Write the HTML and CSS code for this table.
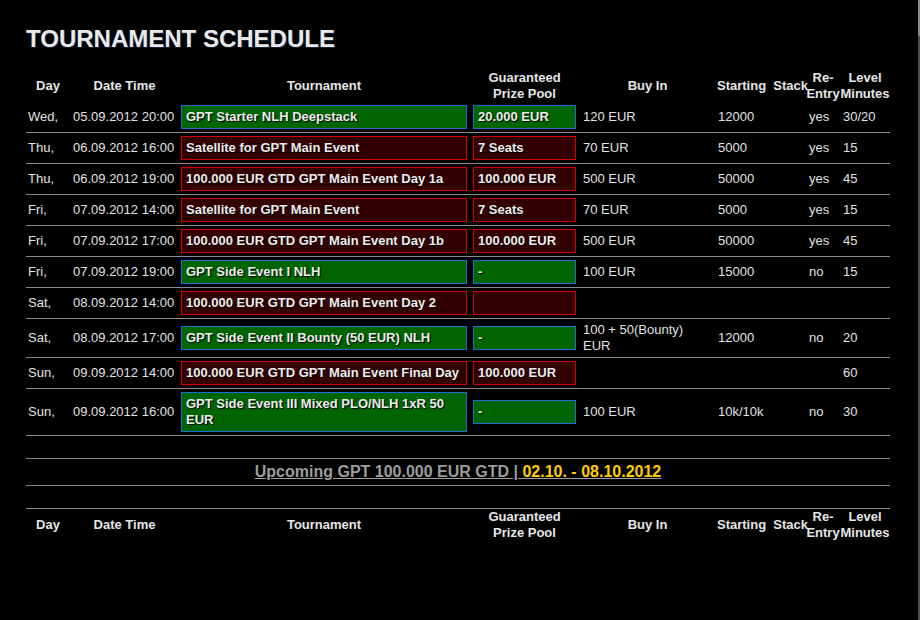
FILE: index.html
```html
<!DOCTYPE html>
<html lang="en">
<head>
<meta charset="utf-8">
<title>Tournament Schedule</title>
<link rel="stylesheet" href="styles.css">
</head>
<body>
<div class="page">
  <main class="content">
    <h1 class="title">TOURNAMENT SCHEDULE</h1>
    <table class="schedule">
      <colgroup>
        <col class="c-day"><col class="c-date"><col class="c-tour"><col class="c-prize"><col class="c-buy"><col class="c-stack"><col class="c-re"><col class="c-level">
      </colgroup>
      <thead>
        <tr><th>Day</th><th>Date Time</th><th>Tournament</th><th>Guaranteed<br>Prize Pool</th><th>Buy In</th><th class="stack-head">Starting&nbsp; Stack</th><th>Re-<br>Entry</th><th>Level<br>Minutes</th></tr>
      </thead>
      <tbody>
        <tr><td>Wed,</td><td>05.09.2012 20:00</td><td class="tour"><div class="box green">GPT Starter NLH Deepstack</div></td><td class="prize"><div class="box green">20.000 EUR</div></td><td class="buy">120 EUR</td><td>12000</td><td>yes</td><td>30/20</td></tr>
        <tr><td>Thu,</td><td>06.09.2012 16:00</td><td class="tour"><div class="box red">Satellite for GPT Main Event</div></td><td class="prize"><div class="box red">7 Seats</div></td><td class="buy">70 EUR</td><td>5000</td><td>yes</td><td>15</td></tr>
        <tr><td>Thu,</td><td>06.09.2012 19:00</td><td class="tour"><div class="box red">100.000 EUR GTD GPT Main Event Day 1a</div></td><td class="prize"><div class="box red">100.000 EUR</div></td><td class="buy">500 EUR</td><td>50000</td><td>yes</td><td>45</td></tr>
        <tr><td>Fri,</td><td>07.09.2012 14:00</td><td class="tour"><div class="box red">Satellite for GPT Main Event</div></td><td class="prize"><div class="box red">7 Seats</div></td><td class="buy">70 EUR</td><td>5000</td><td>yes</td><td>15</td></tr>
        <tr><td>Fri,</td><td>07.09.2012 17:00</td><td class="tour"><div class="box red">100.000 EUR GTD GPT Main Event Day 1b</div></td><td class="prize"><div class="box red">100.000 EUR</div></td><td class="buy">500 EUR</td><td>50000</td><td>yes</td><td>45</td></tr>
        <tr><td>Fri,</td><td>07.09.2012 19:00</td><td class="tour"><div class="box green">GPT Side Event I NLH</div></td><td class="prize"><div class="box green">-</div></td><td class="buy">100 EUR</td><td>15000</td><td>no</td><td>15</td></tr>
        <tr><td>Sat,</td><td>08.09.2012 14:00</td><td class="tour"><div class="box red">100.000 EUR GTD GPT Main Event Day 2</div></td><td class="prize"><div class="box red">&nbsp;</div></td><td class="buy"></td><td></td><td></td><td></td></tr>
        <tr><td>Sat,</td><td>08.09.2012 17:00</td><td class="tour"><div class="box green">GPT Side Event II Bounty (50 EUR) NLH</div></td><td class="prize"><div class="box green">-</div></td><td class="buy">100 + 50(Bounty) EUR</td><td>12000</td><td>no</td><td>20</td></tr>
        <tr><td>Sun,</td><td>09.09.2012 14:00</td><td class="tour"><div class="box red">100.000 EUR GTD GPT Main Event Final Day</div></td><td class="prize"><div class="box red">100.000 EUR</div></td><td class="buy"></td><td></td><td></td><td>60</td></tr>
        <tr><td>Sun,</td><td>09.09.2012 16:00</td><td class="tour"><div class="box green">GPT Side Event III Mixed PLO/NLH 1xR 50 EUR</div></td><td class="prize"><div class="box green">-</div></td><td class="buy">100 EUR</td><td>10k/10k</td><td>no</td><td>30</td></tr>
      </tbody>
    </table>

    <div class="upcoming">
      <a class="upcoming-link" href="#">Upcoming GPT 100.000 EUR GTD | <span class="dates">02.10. - 08.10.2012</span></a>
    </div>

    <table class="schedule next">
      <colgroup>
        <col class="c-day"><col class="c-date"><col class="c-tour"><col class="c-prize"><col class="c-buy"><col class="c-stack"><col class="c-re"><col class="c-level">
      </colgroup>
      <thead>
        <tr><th>Day</th><th>Date Time</th><th>Tournament</th><th>Guaranteed<br>Prize Pool</th><th>Buy In</th><th class="stack-head">Starting&nbsp; Stack</th><th>Re-<br>Entry</th><th>Level<br>Minutes</th></tr>
      </thead>
    </table>
  </main>
  <div class="scrollbar"></div>
</div>
</body>
</html>
```
FILE: styles.css
```css
html, body {
  margin: 0;
  padding: 0;
  background: #000;
}

body {
  font-family: "Liberation Sans", Arial, sans-serif;
  font-size: 13px;
  line-height: 16px;
  color: #e2e2e2;
}

.page {
  display: flex;
  width: 920px;
  height: 620px;
  overflow: hidden;
}

.content {
  flex: 1;
  padding: 25px 0 0 26px;
}

.scrollbar {
  width: 2px;
  background: linear-gradient(#8a8a8a 0, #8a8a8a 36px, #4c4c4c 36px, #4c4c4c 100%);
}

.title {
  margin: 0;
  font-size: 24px;
  line-height: 28px;
  font-weight: bold;
  color: #e9e9e9;
  text-shadow: 1px 1px 1px #1b2a44;
}

.schedule {
  margin-top: 17px;
  width: 864px;
  table-layout: fixed;
  border-collapse: collapse;
  border-spacing: 0;
}

.c-day { width: 44px; }
.c-date { width: 109px; }
.c-tour { width: 290px; }
.c-prize { width: 111px; }
.c-buy { width: 135px; }
.c-stack { width: 91px; }
.c-re { width: 34px; }
.c-level { width: 50px; }

.schedule th {
  height: 32px;
  padding: 0;
  font-weight: bold;
  color: #e6e6e6;
  text-align: center;
  vertical-align: middle;
  white-space: nowrap;
}

.schedule th.stack-head {
  text-indent: 2px;
}

.schedule td {
  padding: 3px 0 3px 3px;
  vertical-align: middle;
  text-align: left;
  border-bottom: 1px solid #8a8a8a;
  white-space: nowrap;
}

.schedule td:first-child {
  padding-left: 2px;
}

.schedule td.tour {
  padding: 3px 2px;
}

.schedule td.prize {
  padding: 3px 4px;
}

.schedule td.buy {
  white-space: normal;
  padding-right: 12px;
}

.box {
  border: 1px solid;
  padding: 3px 4px;
  font-weight: bold;
  color: #ececec;
  text-shadow: 1px 1px 1px #000;
  white-space: normal;
}

.box.green {
  background: #006400;
  border-color: #1d6fcf;
}

.box.red {
  background: #330000;
  border-color: #d00000;
}

.upcoming {
  margin-top: 22px;
  width: 864px;
  border-top: 1px solid #8a8a8a;
  border-bottom: 1px solid #8a8a8a;
  text-align: center;
  line-height: 26px;
  height: 26px;
}

.upcoming-link {
  font-size: 16px;
  font-weight: bold;
  color: #9c9c9c;
  text-decoration: underline;
}

.upcoming-link .dates {
  color: #ffcc00;
}

.schedule.next {
  margin-top: 22px;
}

.schedule.next th {
  border-top: 1px solid #8a8a8a;
}
```
